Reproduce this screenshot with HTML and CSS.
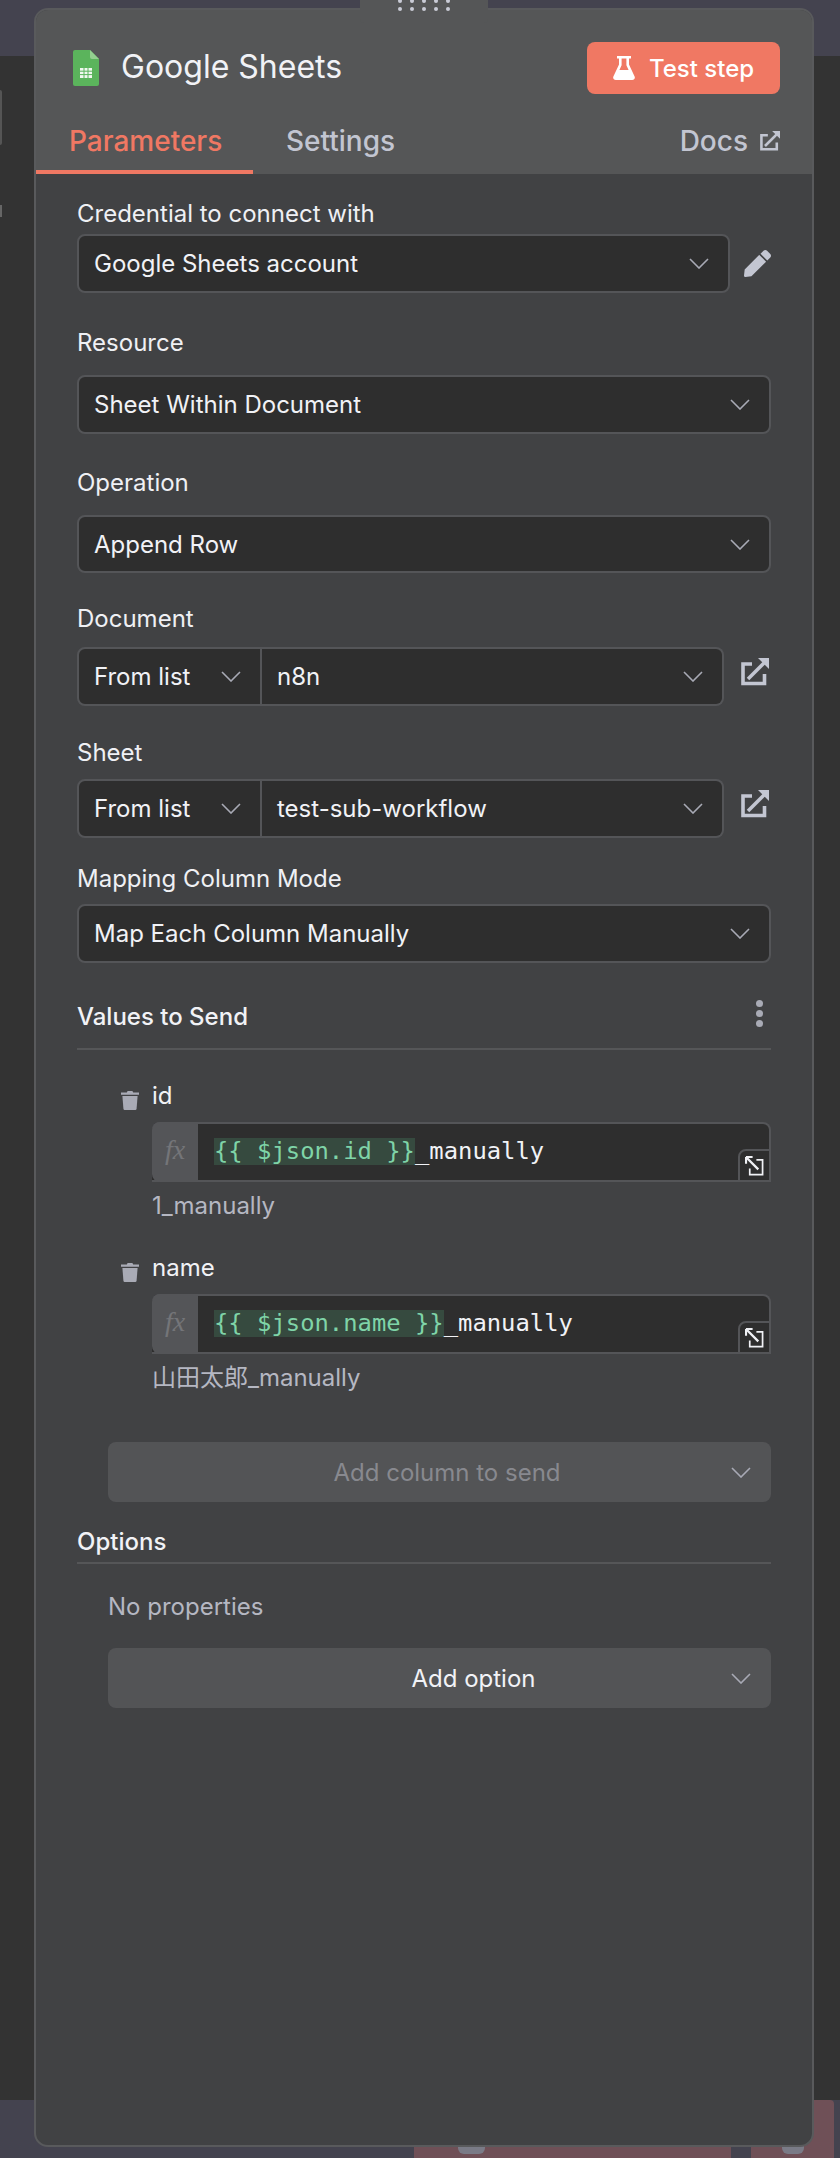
FILE: index.html
```html
<!DOCTYPE html>
<html lang="en">
<head>
    <meta charset="UTF-8">
    <title>Google Sheets - Append Row</title>
    <link rel="stylesheet" href="styles.css">
</head>
<body>
    <!-- canvas behind the panel -->
    <div class="band band-top"></div>
    <div class="band band-bottom"></div>
    <div class="canvas-node node-a"><span class="node-tab"></span></div>
    <div class="canvas-node node-b"><span class="node-tab"></span></div>
    <div class="canvas-edge edge-a"></div>
    <div class="canvas-edge edge-b"></div>

    <div class="panel">
        <div class="drag-handle">
            <span></span><span></span><span></span><span></span><span></span>
            <span></span><span></span><span></span><span></span><span></span>
        </div>

        <div class="panel-header">
            <div class="title-row">
                <div class="title">
                    <svg class="sheets-icon" viewBox="0 0 26 36">
                        <path d="M2 0H17L26 9V34a2 2 0 0 1-2 2H2a2 2 0 0 1-2-2V2a2 2 0 0 1 2-2Z" fill="#5bb45c"/>
                        <path d="M17 0L26 9H19a2 2 0 0 1-2-2Z" fill="#93cf8f"/>
                        <path d="M7 18H19V28H7Z" fill="#f1f8f0"/>
                        <path d="M7 21.2H19M7 24.6H19M11 18V28M15 18V28" stroke="#5bb45c" stroke-width="1"/>
                    </svg>
                    <span class="title-text">Google Sheets</span>
                </div>
                <button class="test-button">
                    <svg class="flask-icon" viewBox="0 0 22 24">
                        <path d="M4 0H18V2.6H16V8.6L21.6 20.4C22.4 22.2 21.2 24 19.2 24H2.8C.8 24-.4 22.2.4 20.4L6 8.6V2.6H4ZM8.6 2.6V9.2L6.4 14H15.6L13.4 9.2V2.6Z" fill="#fff"/>
                    </svg>
                    Test step
                </button>
            </div>
            <div class="tabs">
                <div class="tab tab-active">Parameters</div>
                <div class="tab">Settings</div>
                <div class="tab tab-docs">
                    Docs
                    <svg class="docs-icon" viewBox="0 0 28 28">
                        <path d="M11 6H2V25.5H23.5V16" fill="none" stroke="currentColor" stroke-width="3.6"/>
                        <path d="M7 21L23 5" fill="none" stroke="currentColor" stroke-width="3.6"/>
                        <path d="M17 0H28V11Z" fill="currentColor"/>
                    </svg>
                </div>
            </div>
        </div>

        <div class="panel-body">
            <label class="label label-credential">Credential to connect with</label>
            <div class="field-row">
                <div class="select grow">
                    <span>Google Sheets account</span>
                    <svg class="chevron" viewBox="0 0 20 11"><path d="M1 1L10 10L19 1"/></svg>
                </div>
                <svg class="pencil-icon" viewBox="0 0 512 512">
                    <path d="M290.74 93.24l128.02 128.02-277.99 277.99-114.14 12.6C11.35 513.54-1.56 500.62.14 485.34l12.7-114.22 277.9-278.88zm207.2-19.06l-60.11-60.11c-18.75-18.75-49.16-18.75-67.91 0l-56.55 56.55 128.02 128.02 56.55-56.55c18.75-18.76 18.75-49.16 0-67.91z"/>
                </svg>
            </div>

            <label class="label label-resource">Resource</label>
            <div class="select">
                <span>Sheet Within Document</span>
                <svg class="chevron" viewBox="0 0 20 11"><path d="M1 1L10 10L19 1"/></svg>
            </div>

            <label class="label label-operation">Operation</label>
            <div class="select select-short">
                <span>Append Row</span>
                <svg class="chevron" viewBox="0 0 20 11"><path d="M1 1L10 10L19 1"/></svg>
            </div>

            <label class="label label-document">Document</label>
            <div class="field-row">
                <div class="locator">
                    <div class="select locator-mode">
                        <span>From list</span>
                        <svg class="chevron" viewBox="0 0 20 11"><path d="M1 1L10 10L19 1"/></svg>
                    </div>
                    <div class="select locator-value">
                        <span>n8n</span>
                        <svg class="chevron" viewBox="0 0 20 11"><path d="M1 1L10 10L19 1"/></svg>
                    </div>
                </div>
                <svg class="open-icon" viewBox="0 0 28 28">
                    <path d="M11 6H2V25.5H23.5V16" fill="none" stroke="currentColor" stroke-width="3.6"/>
                    <path d="M7 21L23 5" fill="none" stroke="currentColor" stroke-width="3.6"/>
                    <path d="M17 0H28V11Z" fill="currentColor"/>
                </svg>
            </div>

            <label class="label label-sheet">Sheet</label>
            <div class="field-row">
                <div class="locator">
                    <div class="select locator-mode">
                        <span>From list</span>
                        <svg class="chevron" viewBox="0 0 20 11"><path d="M1 1L10 10L19 1"/></svg>
                    </div>
                    <div class="select locator-value">
                        <span>test-sub-workflow</span>
                        <svg class="chevron" viewBox="0 0 20 11"><path d="M1 1L10 10L19 1"/></svg>
                    </div>
                </div>
                <svg class="open-icon" viewBox="0 0 28 28">
                    <path d="M11 6H2V25.5H23.5V16" fill="none" stroke="currentColor" stroke-width="3.6"/>
                    <path d="M7 21L23 5" fill="none" stroke="currentColor" stroke-width="3.6"/>
                    <path d="M17 0H28V11Z" fill="currentColor"/>
                </svg>
            </div>

            <label class="label label-mapping">Mapping Column Mode</label>
            <div class="select">
                <span>Map Each Column Manually</span>
                <svg class="chevron" viewBox="0 0 20 11"><path d="M1 1L10 10L19 1"/></svg>
            </div>

            <div class="section-head section-values">
                <span>Values to Send</span>
                <div class="more-dots"><span></span><span></span><span></span></div>
            </div>

            <div class="column column-id">
                <div class="column-label">
                    <svg class="trash-icon" viewBox="0 0 18 20">
                        <path d="M0 2.6H5.8L6.6 1H11.4L12.2 2.6H18V4.8H0Z"/>
                        <path d="M1.4 6H16.6L15.6 18.4C15.5 19.4 14.8 20 13.9 20H4.1C3.2 20 2.5 19.4 2.4 18.4Z"/>
                    </svg>
                    <span>id</span>
                </div>
                <div class="expr-input">
                    <div class="fx">fx</div>
                    <div class="code"><span class="code-hl">{{ $json.id }}</span>_manually</div>
                    <div class="expand">
                        <svg class="expand-icon" viewBox="0 0 20 21">
                            <path d="M1 1L14 14M1 1V8M1 1H8" fill="none" stroke="#f0f1f5" stroke-width="2.4"/>
                            <path d="M12 4H18.5V19.5H5V13" fill="none" stroke="#f0f1f5" stroke-width="1.8"/>
                        </svg>
                    </div>
                </div>
                <div class="hint">1_manually</div>
            </div>

            <div class="column column-name">
                <div class="column-label">
                    <svg class="trash-icon" viewBox="0 0 18 20">
                        <path d="M0 2.6H5.8L6.6 1H11.4L12.2 2.6H18V4.8H0Z"/>
                        <path d="M1.4 6H16.6L15.6 18.4C15.5 19.4 14.8 20 13.9 20H4.1C3.2 20 2.5 19.4 2.4 18.4Z"/>
                    </svg>
                    <span>name</span>
                </div>
                <div class="expr-input">
                    <div class="fx">fx</div>
                    <div class="code"><span class="code-hl">{{ $json.name }}</span>_manually</div>
                    <div class="expand">
                        <svg class="expand-icon" viewBox="0 0 20 21">
                            <path d="M1 1L14 14M1 1V8M1 1H8" fill="none" stroke="#f0f1f5" stroke-width="2.4"/>
                            <path d="M12 4H18.5V19.5H5V13" fill="none" stroke="#f0f1f5" stroke-width="1.8"/>
                        </svg>
                    </div>
                </div>
                <div class="hint">山田太郎_manually</div>
            </div>

            <div class="add-select add-column add-disabled">
                <span>Add column to send</span>
                <svg class="chevron" viewBox="0 0 20 11"><path d="M1 1L10 10L19 1"/></svg>
            </div>

            <div class="section-head section-options">
                <span>Options</span>
            </div>
            <div class="no-props">No properties</div>
            <div class="add-select add-option">
                <span>Add option</span>
                <svg class="chevron" viewBox="0 0 20 11"><path d="M1 1L10 10L19 1"/></svg>
            </div>
        </div>
    </div>
</body>
</html>
```

FILE: styles.css
```css
html, body {
    margin: 0;
    height: 2158px;
    overflow: hidden;
}
body {
    position: relative;
    box-sizing: border-box;
    padding: 8px 26px 11px 34px;
    background-color: #333333;
    font-family: Inter, "Noto Sans CJK JP", sans-serif;
    font-size: 24px;
    color: #f1f2f6;
}
.band {
    position: absolute;
    left: 0;
    right: 0;
    background-color: #44434f;
}
.band-top {
    top: 0;
    height: 56px;
}
.band-bottom {
    bottom: 0;
    height: 58px;
}
.canvas-node {
    position: absolute;
    top: 2100px;
    bottom: 0;
    background-color: #6f5057;
}
.node-a {
    left: 414px;
    width: 317px;
}
.node-b {
    left: 751px;
    width: 83px;
    border-radius: 0 4px 0 0;
}
.node-tab {
    position: absolute;
    bottom: 4px;
    height: 12px;
    border-radius: 0 0 6px 6px;
    background-color: #7a7b87;
}
.node-a .node-tab {
    left: 44px;
    width: 27px;
}
.node-b .node-tab {
    left: 31px;
    width: 22px;
}
.canvas-edge {
    position: absolute;
    left: 0;
    width: 2px;
    background-color: #555555;
}
.edge-a {
    top: 90px;
    height: 55px;
    border-radius: 0 3px 3px 0;
}
.edge-b {
    top: 205px;
    height: 12px;
    background-color: #666666;
}

/* panel */
.panel {
    position: relative;
    display: flex;
    flex-direction: column;
    height: 100%;
    box-sizing: border-box;
    border: 2px solid #595a5c;
    border-radius: 14px;
    background-color: #414244;
}
.drag-handle {
    position: absolute;
    top: -11px;
    left: 324px;
    box-sizing: border-box;
    width: 128px;
    height: 24px;
    padding: 0 38px;
    border-radius: 0 0 4px 4px;
    background-color: #555657;
    display: grid;
    grid-template-columns: repeat(5, 4px);
    grid-auto-rows: 4px;
    justify-content: space-between;
    row-gap: 4px;
    align-content: start;
}
.drag-handle span {
    width: 4px;
    height: 4px;
    border-radius: 50%;
    background-color: #c9cbd6;
}
.panel-header {
    height: 164px;
    box-sizing: border-box;
    flex-shrink: 0;
    background-color: #555657;
    border-radius: 12px 12px 0 0;
    display: flex;
    flex-direction: column;
}
.title-row {
    display: flex;
    justify-content: space-between;
    align-items: center;
    padding: 32px 32px 0 37px;
}
.title {
    display: flex;
    align-items: center;
    gap: 22px;
    font-size: 32px;
    font-weight: 400;
}
.title-text {
    margin-top: -4px;
}
.sheets-icon {
    width: 26px;
    height: 36px;
}
.test-button {
    display: flex;
    align-items: center;
    justify-content: center;
    gap: 14px;
    width: 193px;
    height: 52px;
    padding: 0;
    border: none;
    border-radius: 8px;
    background-color: #f07863;
    color: #ffffff;
    font-family: inherit;
    font-size: 24px;
    font-weight: 500;
}
.flask-icon {
    width: 22px;
    height: 24px;
}
.tabs {
    display: flex;
    align-items: stretch;
    margin-top: 18px;
    flex: 1;
}
.tab {
    display: flex;
    align-items: center;
    box-sizing: border-box;
    padding: 0 33px 4px;
    font-size: 28px;
    font-weight: 500;
    color: #c2c5d1;
    white-space: nowrap;
}
.tab-active {
    width: 217px;
    padding-bottom: 0;
    color: #f07863;
    border-bottom: 4px solid #f07863;
}
.tab-docs {
    margin-left: auto;
    padding: 0 32px 4px 0;
    gap: 12px;
}
.docs-icon {
    width: 20px;
    height: 20px;
}

/* fields */
.panel-body {
    padding: 0 41px 0 41px;
}
.label {
    display: block;
    height: 28px;
    line-height: 28px;
    color: #eff0f4;
}
.label-credential { margin-top: 26px; margin-bottom: 6px; }
.label-resource { margin-top: 36px; margin-bottom: 18px; }
.label-operation { margin-top: 35px; margin-bottom: 18px; }
.label-document { margin-top: 32px; margin-bottom: 14px; }
.label-sheet { margin-top: 33px; margin-bottom: 12px; }
.label-mapping { margin-top: 27px; margin-bottom: 11px; }

.field-row {
    display: flex;
    align-items: flex-start;
}
.grow {
    flex: 1;
}
.select {
    display: flex;
    align-items: center;
    justify-content: space-between;
    box-sizing: border-box;
    height: 59px;
    padding: 0 19px 0 15px;
    border: 2px solid #545558;
    border-radius: 8px;
    background-color: #2e2e2e;
    color: #f1f2f6;
    white-space: nowrap;
}
.select-short {
    height: 58px;
}
.chevron {
    width: 20px;
    height: 11px;
    flex-shrink: 0;
    fill: none;
    stroke: #a8aab5;
    stroke-width: 1.6;
}
.pencil-icon {
    width: 27px;
    height: 27px;
    margin: 16px 0 0 14px;
    fill: #c3c6d2;
}
.open-icon {
    width: 28px;
    height: 28px;
    margin: 11px 0 0 17px;
    color: #c3c6d2;
}
.locator {
    flex: none;
    width: 647px;
    display: flex;
}
.locator-mode {
    width: 185px;
    flex-shrink: 0;
    border-radius: 8px 0 0 8px;
}
.locator-value {
    flex: 1;
    border-left: none;
    border-radius: 0 8px 8px 0;
}

/* sections */
.section-head {
    display: flex;
    justify-content: space-between;
    align-items: center;
    font-weight: 500;
    border-bottom: 2px solid #555658;
}
.section-values {
    margin-top: 40px;
    height: 47px;
    padding-bottom: 19px;
    box-sizing: border-box;
}
.more-dots {
    display: flex;
    flex-direction: column;
    gap: 3px;
    margin: -6px 8px 0 0;
}
.more-dots span {
    width: 7px;
    height: 7px;
    border-radius: 50%;
    background-color: #a9abb6;
}
.column {
    margin-left: 75px;
}
.column-id {
    margin-top: 32px;
}
.column-name {
    margin-top: 34px;
}
.column-label {
    position: relative;
    height: 28px;
    line-height: 28px;
    margin-bottom: 12px;
}
.trash-icon {
    position: absolute;
    left: -31px;
    top: 8px;
    width: 18px;
    height: 20px;
    fill: #a9abb6;
}
.expr-input {
    position: relative;
    display: flex;
    height: 60px;
    box-sizing: border-box;
    border: 2px solid #545558;
    border-radius: 8px 8px 0 0;
    border-left: none;
    background-color: #2e2e2e;
}
.fx {
    flex: none;
    width: 46px;
    margin-top: -2px;
    margin-bottom: -2px;
    border-radius: 8px 0 0 8px;
    background-color: #545558;
    color: #747579;
    font-family: "Liberation Serif", serif;
    font-style: italic;
    font-size: 28px;
    line-height: 56px;
    text-align: center;
}
.code {
    padding: 14px 0 0 16px;
    font-family: "DejaVu Sans Mono", monospace;
    font-size: 23.85px;
    line-height: 27px;
    color: #f1f2f6;
    white-space: pre;
}
.code-hl {
    display: inline-block;
    background-color: #364a3f;
    color: #7fd4a8;
}
.expand {
    position: absolute;
    right: -2px;
    bottom: -2px;
    display: flex;
    align-items: center;
    justify-content: center;
    box-sizing: border-box;
    width: 33px;
    height: 33px;
    border: 2px solid #545558;
    border-radius: 8px 0 0 0;
    background-color: #2e2e2e;
}
.expand-icon {
    width: 19px;
    height: 20px;
}
.hint {
    height: 28px;
    line-height: 28px;
    margin-top: 10px;
    color: #b5b7c2;
}
.add-select {
    position: relative;
    display: flex;
    align-items: center;
    justify-content: center;
    height: 60px;
    margin-left: 31px;
    border-radius: 8px;
    background-color: #535456;
    color: #f1f2f6;
}
.add-select .chevron {
    position: absolute;
    right: 20px;
    top: 25px;
}
.add-column {
    margin-top: 50px;
    padding-left: 15px;
}
.add-disabled {
    color: #88898f;
}
.section-options {
    margin-top: 26px;
    height: 36px;
    padding-bottom: 8px;
    box-sizing: border-box;
}
.no-props {
    height: 28px;
    line-height: 28px;
    margin: 29px 0 0 31px;
    color: #b5b7c2;
}
.add-option {
    margin-top: 27px;
    padding-left: 68px;
}
```
